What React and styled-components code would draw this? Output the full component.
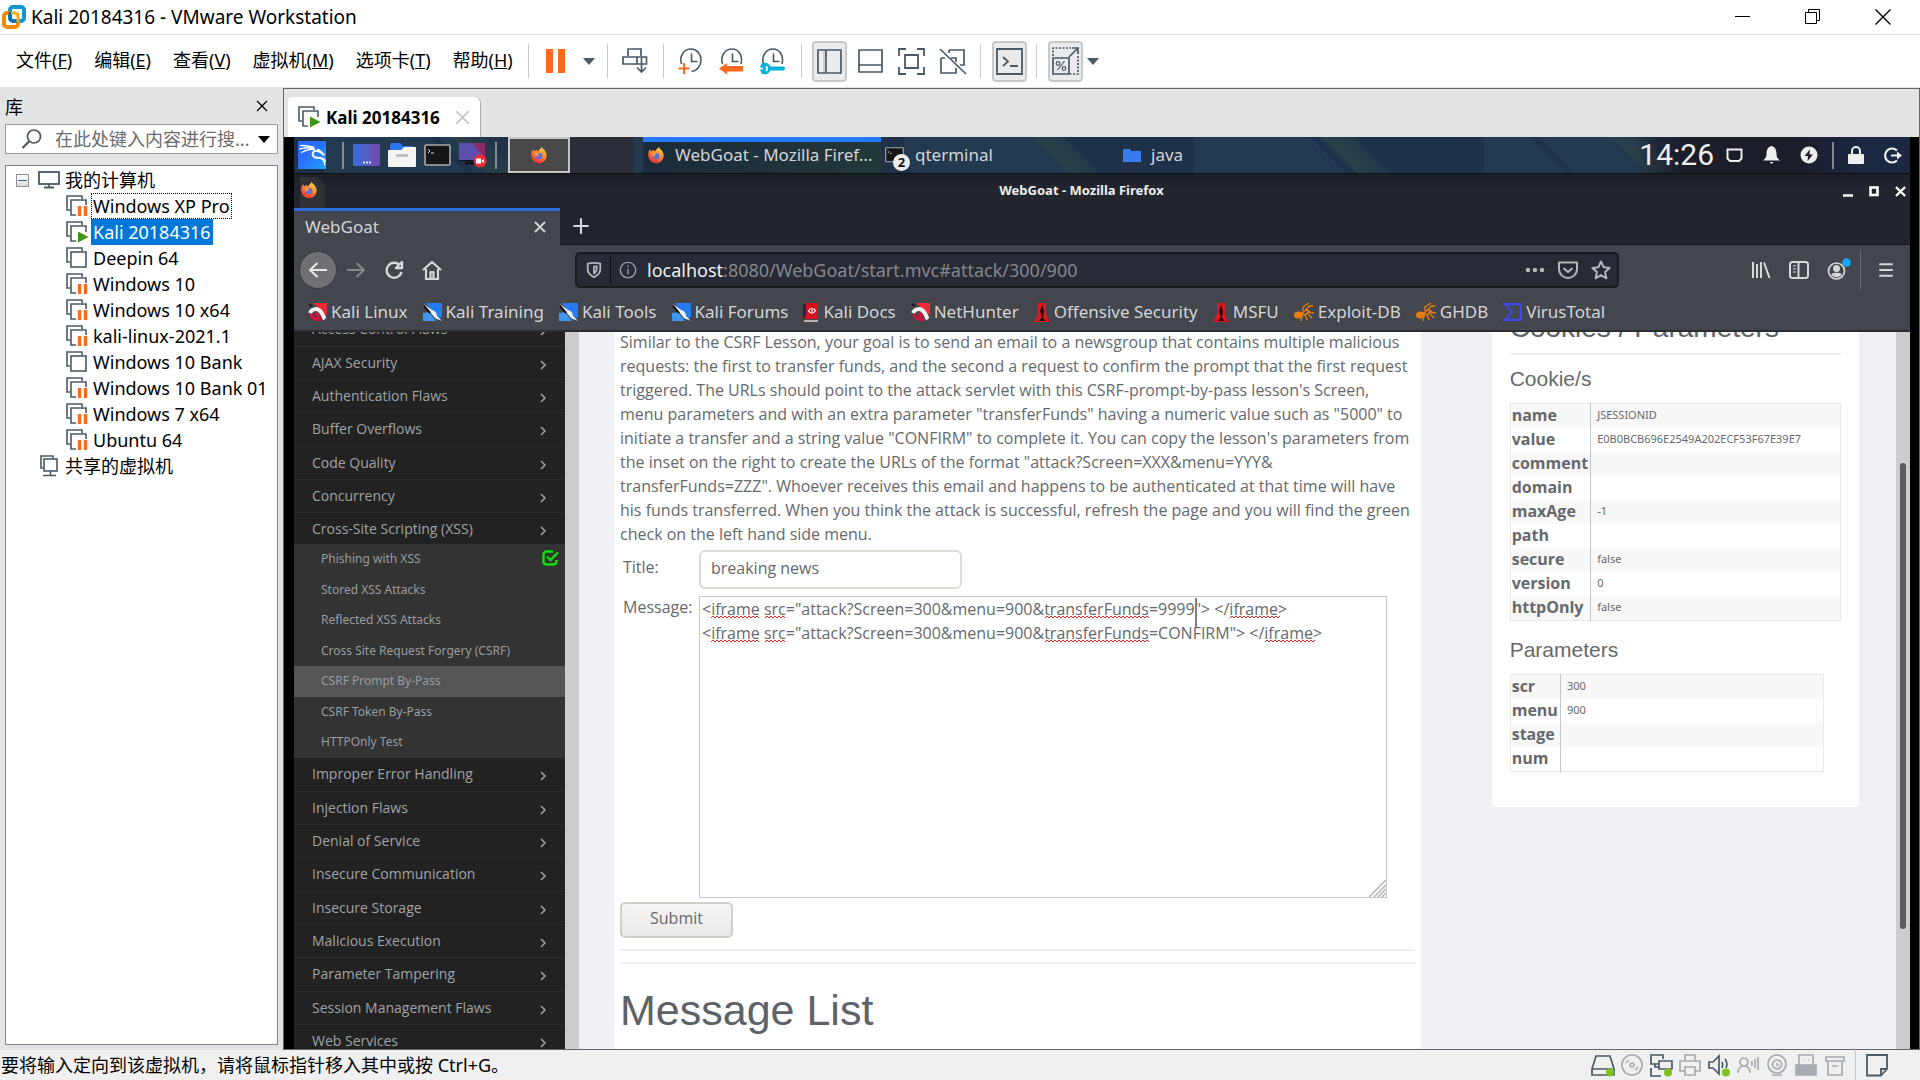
import { useState } from 'react';
import styled, { createGlobalStyle, css } from 'styled-components';
import { SiKalilinux } from 'react-icons/si';

const uiFont = "'Noto Sans', 'Noto Sans CJK SC', sans-serif";
const pageFont = "'Open Sans', 'Noto Sans', sans-serif";
const headingFont = "'Liberation Sans', Arial, sans-serif";

const GlobalStyles = createGlobalStyle`
  *, *::before, *::after {
    box-sizing: border-box;
  }
  body {
    margin: 0;
    overflow: hidden;
    font-family: ${uiFont};
    font-size: 17px;
    color: #000;
  }
  button, input, textarea {
    font: inherit;
    color: inherit;
    margin: 0;
  }
  svg {
    display: block;
    flex: none;
  }
`;

const Window = styled.div`
  display: grid;
  grid-template-rows: 34px 54px minmax(0, 1fr) 30px;
  height: 100vh;
  background: #fff;
`;

const PlainButton = styled.button`
  display: flex;
  align-items: center;
  justify-content: center;
  flex: none;
  padding: 0;
  border: 0;
  background: none;
  white-space: nowrap;
`;

/* ---------- VMware title bar, menu and tool bar ---------- */

const TitleBar = styled.header`
  display: flex;
  align-items: center;
  padding: 0 2px;
`;

const WindowTitle = styled.h1`
  flex: 1;
  margin: 0 0 0 5px;
  font-size: 19px;
  font-weight: normal;
  line-height: 24px;
`;

const WindowControl = styled(PlainButton)`
  width: 70px;
  height: 34px;
`;

const MenuBar = styled.nav`
  display: flex;
  align-items: center;
  padding-left: 16px;
  border-top: 1px solid #dfe0e1;
  border-bottom: 1px solid #e3e4e6;
`;

const Menus = styled.div`
  display: flex;
  gap: 22px;
  margin-right: 15px;
`;

const MenuButton = styled(PlainButton)`
  padding-bottom: 3px;
  font-size: 18px;
  line-height: 26px;
`;

const Separator = styled.span`
  flex: none;
  width: 1px;
  height: 34px;
  margin: ${({ $margin = '0 7px' }) => $margin};
  background: #c8c9ca;
`;

const ToolButton = styled(PlainButton)`
  width: ${({ $width = 41 }) => $width}px;
  height: 42px;
`;

const ToggleButton = styled(PlainButton)`
  width: 35px;
  height: 41px;
  border: 2px solid #c9c9c9;
  border-radius: 4px;
  background: #e9ebec;
`;

/* ---------- Library ---------- */

const Workspace = styled.div`
  display: grid;
  grid-template-columns: 283px minmax(0, 1fr);
  min-height: 0;
`;

const Library = styled.aside`
  display: flex;
  flex-direction: column;
  padding: 0 5px 5px;
  background: #e3e4e6;
`;

const LibraryHeader = styled.div`
  display: flex;
  align-items: center;
  justify-content: space-between;
  height: 36px;
  padding: 0 10px 0 0;
`;

const LibraryTitle = styled.h2`
  margin: 0;
  font-size: 18px;
  font-weight: normal;
`;

const SearchBox = styled.div`
  display: flex;
  align-items: center;
  height: 30px;
  margin-bottom: 11px;
  padding: 0 7px 0 15px;
  border: 1px solid #98999a;
  background: #fff;
`;

const SearchInput = styled.input`
  flex: 1;
  min-width: 0;
  padding: 0 0 0 12px;
  border: 0;
  outline: 0;
  background: none;
  font-size: 18px;
  &::placeholder {
    color: #6b6b6b;
  }
`;

const Tree = styled.ul`
  flex: 1;
  margin: 0;
  padding: 1px 0 0;
  border: 1px solid #7f838a;
  background: #fff;
  list-style: none;
`;

const TreeRow = styled.li`
  display: flex;
  align-items: center;
  height: 26px;
  padding-left: ${({ $depth }) => ($depth ? 59 : 10)}px;
  font-size: 18px;
`;

const TreeLabel = styled.span`
  margin-left: 2px;
  padding: 0 1px;
  border: 1px dotted transparent;
  line-height: 24px;
  white-space: nowrap;
  ${({ $focused }) => $focused && css`
    border-color: #000;
  `}
  ${({ $selected }) => $selected && css`
    background: #0078d7;
    border-color: #0078d7;
    color: #fff;
  `}
`;

const TreeIcon = styled.span`
  display: flex;
  justify-content: center;
  width: 24px;
  margin-left: ${({ $indent = 0 }) => $indent}px;
`;

const Expander = styled(PlainButton)`
  width: 13px;
  height: 13px;
  margin-right: 8px;
  border: 1px solid #919191;
  background: linear-gradient(#fff, #dcdcdc);
`;

/* ---------- Guest display ---------- */

const Display = styled.section`
  display: flex;
  flex-direction: column;
  min-height: 0;
  border: 1px solid #636568;
  background: #e3e4e6;
`;

const VmTabs = styled.div`
  display: flex;
  align-items: flex-end;
  height: 48px;
  padding-left: 4px;
`;

const VmTab = styled.div`
  display: flex;
  align-items: center;
  height: 40px;
  padding: 0 10px 0 9px;
  border: 1px solid #a9abad;
  border-width: 0 1px 0 0;
  border-radius: 4px 6px 0 0;
  background: #fff;
  font-weight: bold;
`;

const VmTabName = styled.span`
  margin: 0 15px 0 5px;
  font-size: 17px;
`;

const Guest = styled.div`
  flex: 1;
  display: flex;
  flex-direction: column;
  min-height: 0;
  padding: 0 9px 0 10px;
  background: #000;
  color: #d3d5d8;
`;

const KaliPanel = styled.div`
  display: flex;
  align-items: center;
  height: 37px;
  padding-right: 8px;
  border-bottom: 1px solid #0d0f13;
  background:
    linear-gradient(90deg, transparent 83%, #1b1d29 86%, #1b1d29 93%, #1c2742 97%),
    linear-gradient(45deg, transparent 44%, #1f2f4e 44%, #20324a 47%, transparent 47%) 500px 0 / 220px 100%,
    linear-gradient(45deg, #223950 50%, #2a4146 50%, #22384c 60%, #1f3049 60%) 30px 0 / 290px 100%,
    #21344c;
`;

const PanelDivider = styled.span`
  width: 2px;
  height: 27px;
  margin: ${({ $margin }) => $margin};
  background: #85898f;
`;

const DragonTile = styled.span`
  display: flex;
  align-items: center;
  justify-content: center;
  width: 28px;
  height: 28px;
  margin-left: 4px;
  background: linear-gradient(135deg, #2a6cff 40%, #22a4ff);
  color: #f3f8ff;
`;

const Launchers = styled.div`
  display: flex;
  align-items: center;
  gap: 8px;
`;

const Pager = styled.div`
  display: grid;
  grid-template-columns: 62px 64px;
  height: 36px;
  margin-right: 9px;
  background: #2b2d38;
`;

const ActiveDesk = styled(PlainButton)`
  border: 2px solid #c5c6c5;
  background: #484848;
`;

const Task = styled(PlainButton)`
  justify-content: flex-start;
  width: 238px;
  height: 36px;
  gap: ${({ $gap = 10 }) => $gap}px;
  padding: 0 4px 5px;
  border-top: 5px solid transparent;
  line-height: 24px;
  ${({ $active }) => $active && css`
    border-color: #2777ff;
    background: linear-gradient(90deg, #1b2b3b, #22383a);
  `}
`;

const TerminalIcon = styled.span`
  position: relative;
  display: block;
  padding-right: 7px;
`;

const CountBadge = styled.span`
  position: absolute;
  left: 8px;
  top: 7px;
  width: 17px;
  height: 17px;
  border-radius: 50%;
  background: #eee;
  color: #111;
  font-size: 13px;
  font-weight: bold;
  line-height: 17px;
  text-align: center;
`;

const Tray = styled.div`
  display: flex;
  align-items: center;
  gap: 20px;
  margin-left: auto;
`;

const Clock = styled.time`
  margin-right: -8px;
  color: #eee;
  font-family: Roboto, sans-serif;
  font-size: 30px;
  line-height: 36px;
`;

const FirefoxTitle = styled.div`
  display: flex;
  align-items: flex-end;
  height: 34px;
  padding: 0 4px 0 6px;
  background: linear-gradient(#1b1e24, #22252d 40%);
`;

const DocBadge = styled.span`
  width: 25px;
  height: 31px;
  padding-top: 4px;
  background: #2f3137;
  clip-path: polygon(0 0, 70% 0, 100% 25%, 100% 100%, 0 100%);
`;

const FirefoxTitleText = styled.span`
  flex: 1;
  align-self: flex-start;
  padding-right: 5px;
  color: #eee;
  font-size: 13px;
  font-weight: bold;
  line-height: 32px;
  text-align: center;
`;

const FrameControls = styled.div`
  display: flex;
  align-self: center;
  gap: 16px;
`;

const TabStrip = styled.div`
  display: flex;
  height: 37px;
  border-bottom: 1px solid #17191e;
  background: #22252d;
`;

const BrowserTab = styled.div`
  display: flex;
  align-items: center;
  justify-content: space-between;
  width: 266px;
  height: 37px;
  padding: 0 14px 2px 11px;
  border-top: 3px solid #2c6be0;
  background: #43464c;
  line-height: 24px;
`;

const NewTab = styled(PlainButton)`
  width: 41px;
`;

const NavBar = styled.div`
  display: flex;
  align-items: center;
  height: 50px;
  padding: 0 15px 0 5px;
  background: #43464c;
`;

const BackButton = styled(PlainButton)`
  width: 38px;
  height: 38px;
  border: 1px solid #36383d;
  border-radius: 50%;
  background: #6f7073;
`;

const NavButton = styled(PlainButton)`
  width: 38px;
`;

const UrlBar = styled.div`
  display: flex;
  align-items: center;
  flex: 1;
  height: 36px;
  margin: 0 132px 0 124px;
  padding: 0 6px 0 8px;
  border: 2px solid #191b20;
  border-radius: 5px;
  background: #282a35;
`;

const UrlDivider = styled.span`
  width: 1px;
  height: 28px;
  margin: 0 8px 0 7px;
  background: #0c0d10;
`;

const Url = styled.span`
  flex: 1;
  margin-left: 10px;
  color: #85878e;
  font-size: 18px;
  line-height: 24px;
  b {
    color: #f0f1f3;
    font-weight: normal;
  }
`;

const UrlActions = styled.div`
  display: flex;
  gap: 13px;
`;

const BrowserTools = styled.div`
  display: flex;
  align-items: center;
  gap: 18px;
`;

const ToolsDivider = styled.span`
  width: 1px;
  height: 40px;
  margin: 0 -2px 0 -10px;
  background: #64676c;
`;

const Bookmarks = styled.div`
  display: flex;
  gap: 15px;
  height: 37px;
  padding: 0 0 1px 14px;
  border-bottom: 2px solid #2c2d31;
  background: #43464c;
`;

const Bookmark = styled.a`
  display: flex;
  align-items: center;
  gap: 4px;
  color: #d3d5d8;
  line-height: 24px;
  text-decoration: none;
  white-space: nowrap;
`;

/* ---------- WebGoat page ---------- */

const Page = styled.main`
  flex: 1;
  display: flex;
  min-height: 0;
  overflow: hidden;
  background: #f0f1f7;
  color: #65696d;
  font-family: ${pageFont};
  font-size: 16px;
`;

const SideMenu = styled.nav`
  flex: none;
  width: 271px;
  overflow: hidden;
  background: #222;
`;

const CategoryRow = styled.li`
  height: 33px;
  border-bottom: 1px solid #2e2e2e;
  &:nth-child(3n + 1) {
    height: 34px;
  }
`;

/* the list above the open category is scrolled partly out of view */
const SideList = styled.ul`
  margin: 0;
  padding: 0;
  list-style: none;
  ${({ $scrolled }) => $scrolled && css`
    margin-top: -19px;
    ${CategoryRow}:last-child {
      height: 31px;
      border-bottom: 0;
    }
  `}
`;

const CategoryLink = styled.a`
  display: flex;
  align-items: center;
  justify-content: space-between;
  height: 31px;
  padding: 0 18px;
  color: #a0a3a6;
  font-size: 14px;
  text-decoration: none;
  svg {
    margin-top: 5px;
  }
`;

const LessonList = styled.ul`
  margin: 0;
  padding: 0;
  background: #333;
  list-style: none;
`;

const LessonRow = styled.li`
  height: 30px;
  background: ${({ $current }) => ($current ? '#555' : 'transparent')};
  &:nth-child(odd) {
    height: 31px;
  }
`;

const LessonLink = styled.a`
  display: flex;
  align-items: center;
  justify-content: space-between;
  height: 28px;
  padding: 0 6px 0 27px;
  color: #999c9f;
  font-family: ${uiFont};
  font-size: 12px;
  text-decoration: none;
`;

const ScrollTrack = styled.div`
  flex: none;
  width: 14px;
  padding: ${({ $offset = 0 }) => $offset}px 4px 0;
  background: #cdcdcd;
`;

const ScrollThumb = styled.div`
  height: 466px;
  border-radius: 4px;
  background: #585e5e;
`;

const Columns = styled.div`
  flex: 1;
  display: grid;
  grid-template-columns: 806fr 367fr;
  column-gap: 71px;
  align-items: start;
  padding: 0 37px 0 35px;
`;

const Lesson = styled.article`
  min-height: 100%;
  padding: 0 6px;
  background: #fff;
`;

const Instructions = styled.p`
  margin: -2px 0 0;
  line-height: 24px;
  white-space: pre-line;
`;

const LessonForm = styled.form`
  padding-top: 4px;
`;

const Field = styled.div`
  display: flex;
  align-items: flex-start;
  padding-left: 3px;
  margin-bottom: ${({ $gap }) => $gap}px;
`;

const FieldLabel = styled.label`
  width: 76px;
  line-height: ${({ $height }) => $height}px;
`;

const TitleInput = styled.input`
  width: 263px;
  height: 39px;
  padding: 0 10px 3px;
  border: 2px solid #dedbd7;
  border-radius: 6px;
  background: #fff;
  outline: 0;
`;

const Editor = styled.div`
  position: relative;
  width: 688px;
  height: 302px;
`;

const MessageInput = styled.textarea`
  display: block;
  width: 100%;
  height: 100%;
  padding: 0 2px;
  overflow: hidden;
  border: 1px solid #c9c4c0;
  background: #fff;
  outline: 0;
  resize: none;
  line-height: 24px;
`;

const SpellMark = styled.svg`
  position: absolute;
  left: ${({ $left }) => $left}px;
  top: ${({ $line }) => 19 + $line * 24}px;
`;

const PointerBar = styled.span`
  position: absolute;
  left: 496px;
  top: 2px;
  width: 2px;
  height: 29px;
  background: #7b7e82;
`;

const Grip = styled.svg`
  position: absolute;
  right: 1px;
  bottom: 1px;
`;

const SubmitButton = styled(PlainButton)`
  width: 113px;
  height: 36px;
  padding-bottom: 4px;
  border: 2px solid #d2cec9;
  border-radius: 5px;
  background: linear-gradient(#f6f5f4, #eae9e8);
`;

const Rule = styled.hr`
  height: 2px;
  margin: ${({ $top }) => $top}px 0 0;
  border: 0;
  background: #efeff0;
`;

const MessageHeading = styled.h2`
  margin: 22px 0 0;
  color: #5d6267;
  font-family: ${headingFont};
  font-size: 43px;
  font-weight: normal;
  line-height: 48px;
`;

const ParamsCard = styled.aside`
  height: 475px;
  padding: 0 18px;
  overflow: hidden;
  border-radius: 0 0 4px 4px;
  background: #fff;
`;

const CardTitle = styled.h3`
  margin: -20px 0 0;
  color: #5d6267;
  font-family: ${headingFont};
  font-size: 28px;
  font-weight: normal;
  line-height: 32px;
`;

const CardHeading = styled.h4`
  margin: ${({ $top }) => $top}px 0 10px;
  color: #65696d;
  font-family: ${headingFont};
  font-size: 21px;
  font-weight: normal;
  line-height: 28px;
`;

const ParamTable = styled.table`
  width: ${({ $width }) => $width};
  border-collapse: collapse;
  border: 1px solid #e9e9e9;
  tr:nth-child(odd) {
    background: #f8f8f8;
  }
  th {
    width: 1px;
    padding: 0 2px 2px 1px;
    border-right: 1px solid #c5c5c5;
    font-size: 16px;
    line-height: 22px;
    text-align: left;
  }
  td {
    padding: 0 6px 2px;
    font-family: ${uiFont};
    font-size: 11px;
    line-height: 22px;
  }
`;

/* ---------- Status bar ---------- */

const StatusBar = styled.footer`
  display: flex;
  align-items: center;
  justify-content: space-between;
  padding: 0 32px 0 1px;
  background: #f0f0f0;
  font-size: 18px;
  line-height: 28px;
`;

const Devices = styled.div`
  display: flex;
  align-items: center;
  gap: 5px;
`;

/* ---------- Icons ---------- */

const slate = '#4a5a67';
const orange = '#ff6a1f';

const VmwareLogo = () => (
  <svg width="24" height="24" viewBox="0 0 24 24" fill="none" strokeWidth="4">
    <rect x="8" y="2" width="14" height="14" rx="3" stroke="#0f95d4" />
    <path d="M8 8H5a3 3 0 0 0-3 3v8a3 3 0 0 0 3 3h8a3 3 0 0 0 3-3v-3" stroke="#f38b00" />
    <path d="M8 7v6a3 3 0 0 0 3 3h5" stroke="#0a6fae" strokeWidth="3" />
    <path d="M9 8h4a3 3 0 0 1 3 3v6" stroke="#f7a71c" strokeWidth="3" />
  </svg>
);

const Triangle = ({ color = slate }) => (
  <svg width="12" height="7" viewBox="0 0 12 7">
    <path d="M0 0h12L6 7z" fill={color} />
  </svg>
);

const VmIcon = ({ state }) => (
  <svg width="24" height="24" viewBox="0 0 24 24" fill="none" stroke={slate} strokeWidth="1.6">
    <path d="M5 16H2V2h15v3" />
    {state === 'off' && <rect x="6" y="6" width="15" height="15" />}
    {state === 'paused' && (
      <>
        <path d="M11 21H6V6h15v5" />
        <path d="M14.5 12v10M20.5 12v10" stroke={orange} strokeWidth="3.4" />
      </>
    )}
    {state === 'running' && (
      <>
        <path d="M11 21H6V6h15v6" />
        <path d="M13 11.5l10.500 5.500L13 22.500z" fill="#3f960f" stroke="none" />
      </>
    )}
  </svg>
);

const MonitorIcon = () => (
  <svg width="22" height="18" viewBox="0 0 22 18" fill="none" stroke={slate} strokeWidth="1.8">
    <rect x="1" y="1" width="20" height="12" />
    <path d="M11 13v3M6 16.500h10" />
  </svg>
);

const SharedIcon = () => (
  <svg width="18" height="22" viewBox="0 0 18 22" fill="none" stroke={slate} strokeWidth="1.6">
    <path d="M4 13H1V1h12v2" />
    <rect x="4" y="4" width="13" height="12" />
    <path d="M10.500 16v4M3 20.500h13" />
  </svg>
);

const SearchIcon = () => (
  <svg width="22" height="22" viewBox="0 0 22 22" fill="none" stroke="#4d565e" strokeWidth="1.7">
    <circle cx="13" cy="8.5" r="6.5" />
    <path d="M8.500 13L1.500 20" strokeWidth="2.2" />
  </svg>
);

const Cross = ({ size = 12, color = '#000', width = 1.3 }) => (
  <svg width={size} height={size} viewBox="0 0 12 12" stroke={color} strokeWidth={width}>
    <path d="M1 1l10 10M11 1L1 11" />
  </svg>
);

const SendKeysIcon = () => (
  <svg width="26" height="26" viewBox="0 0 26 26" fill="none" stroke={slate} strokeWidth="1.7">
    <path d="M6 8V1h13v7M1 9h23.500v7H1zM15 9v7M19.500 9v15M15 19.500l4.500 4.500 4.500-4.500" />
  </svg>
);

const SnapshotIcon = ({ kind }) => (
  <svg width="26" height="28" viewBox="0 0 26 28" fill="none" stroke={slate} strokeWidth="1.6">
    {kind === 'take' ? (
      <path d="M3.500 17C1 9 6 2 13 2c6 0 10 5 10 11s-4 11-9.500 11.500" />
    ) : (
      <path d="M3.500 17C1 9 6 2 13 2s11 7 9 15" />
    )}
    <path d="M13.500 6.500v8h6" />
    {kind === 'take' && <path d="M6 16v11M.5 21.500h11" stroke={orange} strokeWidth="2" />}
    {kind === 'revert' && <path d="M0 21.500l8-5.500v3h16v5.500H8v3z" fill={orange} stroke="none" />}
    {kind === 'manage' && (
      <g stroke="#05b3d8" strokeLinecap="round">
        <path d="M10 21.500h13" strokeWidth="4" />
        <path d="M2.500 17.500c4-1.500 7 1 7 4s-3 5.500-7 4M1.500 19.500h3v4h-3" strokeWidth="2.6" />
      </g>
    )}
  </svg>
);

const LibraryViewIcon = () => (
  <svg width="25" height="25" viewBox="0 0 25 25" fill="none" stroke={slate} strokeWidth="1.7">
    <path d="M1 1h23v23H1zM9 1v23" />
    <path d="M7 2v21" stroke="#c5cbd0" />
  </svg>
);

const ThumbnailIcon = () => (
  <svg width="25" height="24" viewBox="0 0 25 24" fill="none" stroke={slate} strokeWidth="1.7">
    <path d="M1 1h23v22H1zM1 16h23" />
  </svg>
);

const FullscreenIcon = () => (
  <svg width="27" height="27" viewBox="0 0 27 27" fill="none" stroke={slate} strokeWidth="1.8">
    <path d="M1 8V1h7M19 1h7v7M26 19v7h-7M8 26H1v-7M7 7h13v13H7z" />
  </svg>
);

const UnityIcon = () => (
  <svg width="28" height="27" viewBox="0 0 28 27" fill="none" stroke={slate} strokeWidth="1.7">
    <path d="M10 2h15v15h-4M10 2v3M2 10v15h15v-5M2 10h4M12 10h5v4M1 1l26 25" />
  </svg>
);

const ConsoleIcon = () => (
  <svg width="27" height="27" viewBox="0 0 27 27" fill="none" stroke={slate} strokeWidth="1.8">
    <path d="M1 1h25v25H1zM7 9l5 4.500L7 18M14 18h8" />
  </svg>
);

const StretchIcon = () => (
  <svg width="27" height="28" viewBox="0 0 27 28" fill="none" stroke={slate} strokeWidth="1.7">
    <path d="M1 9V1h18M26 9v18h-8" strokeDasharray="2 1.5" />
    <path d="M1 11h16v16H1zM17 10L25 2M20 1h6v6" />
    <path d="M5.500 23l7-9" strokeWidth="1.2" />
    <circle cx="6" cy="16.5" r="1.8" strokeWidth="1.2" />
    <circle cx="12" cy="21.5" r="1.8" strokeWidth="1.2" />
  </svg>
);

const FirefoxIcon = ({ size = 18 }) => (
  <svg width={size} height={size} viewBox="0 0 20 20">
    <defs>
      <linearGradient id="fox" x1="0.8" y1="0" x2="0.3" y2="1">
        <stop offset="0" stopColor="#ffe14d" />
        <stop offset="0.45" stopColor="#ff8a2b" />
        <stop offset="1" stopColor="#f0283f" />
      </linearGradient>
    </defs>
    <path
      d="M13 1c1 2 5 4 5.500 9a8.500 8.500 0 0 1-17 1.500C1 8 2 5 3.500 3.500L4.500 6 7 4.500 9 6c1-2.500 3-3 4-5z"
      fill="url(#fox)"
    />
    <circle cx="10" cy="11" r="3.6" fill="#5a6fe0" />
    <path d="M5 8c3-1 5 0 6 1-2 0-3 1-2 2.500-2 .5-4-1-4-3.500z" fill="#ff9a3a" />
  </svg>
);

const DesktopTile = () => (
  <svg width="27" height="22" viewBox="0 0 27 22">
    <defs>
      <linearGradient id="desk">
        <stop offset="0" stopColor="#376fe0" />
        <stop offset="1" stopColor="#7249a8" />
      </linearGradient>
    </defs>
    <rect width="27" height="22" rx="1" fill="url(#desk)" />
    <path d="M10 18.500h8" stroke="#dfe6ff" strokeWidth="2" strokeDasharray="2 1" />
  </svg>
);

const FilesTile = () => (
  <svg width="28" height="26" viewBox="0 0 28 26">
    <path d="M2 3a2 2 0 0 1 2-2h8l3 3h9a2 2 0 0 1 2 2v6H2z" fill="#2f73ee" />
    <path d="M0 8h13l3-3h12v19a1 1 0 0 1-1 1H1a1 1 0 0 1-1-1z" fill="#f4f4f4" />
    <path d="M8 13.500h12" stroke="#b9b9b9" strokeWidth="2.5" />
  </svg>
);

const TerminalTile = ({ width = 27 }) => (
  <svg width={width} height={(width * 22) / 27} viewBox="0 0 27 22" fill="none">
    <rect x="1" y="1" width="25" height="20" rx="1" fill="#161616" stroke="#a9a9a9" strokeWidth="1.6" />
    <path d="M4 5l2 2-2 2M7 9h3" stroke="#ddd" />
  </svg>
);

const RecordTile = () => (
  <svg width="28" height="26" viewBox="0 0 28 26">
    <rect y="1" width="26" height="17" fill="#5b4fae" />
    <path d="M14 1h12v17z" fill="#8a2d66" />
    <path d="M0 18.500h26" stroke="#0e1018" />
    <path d="M6 21h9" stroke="#0e1018" strokeWidth="3" />
    <circle cx="21" cy="19" r="6.5" fill="#ee2a35" />
    <path d="M17 16.500h5v5h-5zM22 19l3-2v4z" fill="#fff" />
  </svg>
);

const FolderIcon = () => (
  <svg width="18" height="14" viewBox="0 0 18 14">
    <path d="M0 1h7l1 2h10v11H0z" fill="#367bf0" />
  </svg>
);

const trayIcons = {
  display: (
    <svg width="17" height="15" viewBox="0 0 17 15" fill="none" stroke="#eee" strokeWidth="2">
      <path d="M1.500 1.500h14v9L13 13H4l-2.500-2.500z" />
    </svg>
  ),
  bell: (
    <svg width="17" height="18" viewBox="0 0 17 18" fill="#eee">
      <path d="M8.500 0C5 1 3.500 3.500 3.500 8c0 3-1 4.500-3.500 6.500h17C14.500 12.500 13.500 11 13.500 8 13.500 3.500 12 1 8.500 0zM6.500 16h4l-2 2z" />
    </svg>
  ),
  power: (
    <svg width="18" height="18" viewBox="0 0 18 18">
      <circle cx="9" cy="9" r="8.5" fill="#eee" />
      <path d="M10 3.500L4.500 10H8l-.5 5L13 8.500H9.500z" fill="#1b1d29" />
    </svg>
  ),
  lock: (
    <svg width="16" height="18" viewBox="0 0 16 18">
      <path d="M4 9V5a4 4 0 0 1 8 0v4" fill="none" stroke="#eee" strokeWidth="2" />
      <rect y="8" width="16" height="10" rx="1" fill="#eee" />
    </svg>
  ),
  logout: (
    <svg width="18" height="17" viewBox="0 0 18 17" fill="none" stroke="#eee" strokeWidth="2.2">
      <path d="M13 3.500a7 7 0 1 0 0 10M7 8.500h8" />
      <path d="M13 4.500l5 4-5 4z" fill="#eee" stroke="none" />
    </svg>
  ),
};

const Glyph = ({ d, size = 20, color = '#d6d7d9', width = 2, fill = 'none' }) => (
  <svg
    width={size}
    height={size}
    viewBox="0 0 20 20"
    fill={fill}
    stroke={color}
    strokeWidth={width}
    strokeLinejoin="round"
  >
    <path d={d} />
  </svg>
);

const paths = {
  back: 'M19 10H2M9.500 3L2 10l7.500 7',
  forward: 'M1 10h17M10.500 3l7.500 7-7.500 7',
  reload: 'M16 5.500A7.500 7.500 0 1 0 17.500 12M18 2v6h-6z',
  home: 'M1 10l9-8 9 8M4 9v10h12V9M8.500 18v-6h3v6',
  shield: 'M10 2c3 0 5 .5 7 1v6c0 4-2.500 7-7 9-4.500-2-7-5-7-9V3c2-.5 4-1 7-1zM10 6v8c2-1.500 3-3 3-5V6z',
  info: 'M10 1.500a8.500 8.500 0 1 0 .01 0zM10 9v6M10 5v2',
  pocket: 'M1 2.500h18V9c0 5-4 9-9 9s-9-4-9-9zM5.500 8l4.500 4 4.500-4',
  star: 'M10 1.500l2.600 5.700 6 .7-4.500 4.200 1.300 6.200L10 15l-5.400 3.300 1.300-6.200L1.400 7.900l6-.7z',
  library: 'M2 2v16M6 4v14M10 2v16M13 2.500l5.500 15.500',
  menu: 'M2.500 3.500h15M2.500 10h15M2.500 16.500h15',
};

const SidebarIcon = () => (
  <svg width="20" height="18" viewBox="0 0 20 18" fill="none" stroke="#d6d7d9" strokeWidth="2">
    <rect x="1" y="1" width="18" height="16" rx="2.5" />
    <path d="M9.500 1v16" />
    <path d="M4 5h3M4 8h3M4 11h3" strokeWidth="1.2" />
  </svg>
);

const AccountIcon = () => (
  <svg width="25" height="24" viewBox="0 0 25 24">
    <circle cx="9.5" cy="13" r="8" fill="none" stroke="#d6d7d9" strokeWidth="1.7" />
    <circle cx="9.5" cy="10.5" r="3.5" fill="#d6d7d9" />
    <path d="M4 16.500c1.500-2.500 9.500-2.500 11 0-3 3.500-8 3.500-11 0z" fill="#d6d7d9" />
    <circle cx="19.5" cy="4.500" r="4.2" fill="#12a9f5" />
  </svg>
);

const BookmarkIcon = ({ kind }) => {
  switch (kind) {
    case 'kali-red':
      return (
        <svg width="19" height="18" viewBox="0 0 19 18" fill="none">
          <path d="M5 0h14v13z" fill="#ee2b33" />
          <path d="M1 1l3 2" stroke="#15161a" strokeWidth="2" />
          <path d="M2 10c2-5 8-5 11-1 2 2 2 5 4 7" stroke="#f1f1f1" strokeWidth="4" />
          <path d="M3 11c1 5 6 6 10 5" stroke="#d3143f" strokeWidth="3.4" />
          <path d="M7 10l5 4" stroke="#d3143f" strokeWidth="3" />
        </svg>
      );
    case 'kali-blue':
      return (
        <svg width="19" height="18" viewBox="0 0 19 18" fill="none">
          <path d="M3 0h16v14l-5 3z" fill="#247bf2" />
          <path d="M0 10l6-1 7 9H0z" fill="#3f97ef" />
          <path d="M1 1l8 6c4 1 5 4 5 6l5 5-7-3-4-5z" fill="#f2f5f8" />
          <path d="M1 3l6 7" stroke="#14161b" strokeWidth="2" />
        </svg>
      );
    case 'docs':
      return (
        <svg width="16" height="19" viewBox="0 0 16 19" fill="none">
          <path d="M0 1h3v15H0z" fill="#2a1e4b" />
          <path d="M3 0h12v16H1v-2l2-1z" fill="#d5121b" />
          <path d="M1 18h14" stroke="#e8d5d5" strokeWidth="1.5" />
          <path d="M7.500 5.500L5.500 8l2 2M10.500 5.500l2 2-2 2.500M9 5v6" stroke="#fff" strokeWidth="1.2" />
        </svg>
      );
    case 'offsec':
      return (
        <svg width="16" height="19" viewBox="0 0 16 19">
          <path d="M4 0h8v11l4 8H0l4-8z" fill="#d91920" />
          <path d="M8 2l2 6-1 7 3 3H5l3-4-2-6z" fill="#24090b" />
        </svg>
      );
    case 'bug':
      return (
        <svg width="20" height="18" viewBox="0 0 20 18" fill="none" stroke="#e67c12" strokeWidth="1.4">
          <ellipse cx="4.5" cy="12" rx="4.500" ry="3.500" fill="#e67c12" stroke="none" />
          <path d="M8 10l4-3 3 1-4 4zM9 8L9 4l6-4M12 7l3-4h4M14 9l6 1M11 11l2 6M8 13l-1 5M13 10l5 5" />
        </svg>
      );
    default:
      return (
        <svg width="19" height="18" viewBox="0 0 19 18" fill="none" stroke="#3d4bea" strokeWidth="2.2">
          <path d="M2 1.200h15.800v15.600H2L9 9z" />
        </svg>
      );
  }
};

const Chevron = () => (
  <svg width="7" height="10" viewBox="0 0 7 10" fill="none" stroke="#a0a3a6" strokeWidth="1.5">
    <path d="M1 1l4 4-4 4" />
  </svg>
);

const SolvedIcon = () => (
  <svg width="17" height="16" viewBox="0 0 17 16" fill="none" stroke="#0be30b" strokeWidth="2.4">
    <path d="M11 1.500H4.500a3 3 0 0 0-3 3v7a3 3 0 0 0 3 3h7a3 3 0 0 0 3-3V10" />
    <path d="M5 6.500l3.500 3.500L16 2.500" />
  </svg>
);

const faded = '#a6acb2';
const deviceIcons = [
  ['硬盘', slate, <path key="a" d="M5 3h14l4 13v6H1v-6zM1 16h20" />, true],
  ['CD/DVD', faded, <path key="a" d="M12 2a10 10 0 1 0 .01 0zM12 10a2 2 0 1 0 .01 0zM6 10l3-3M15 17l3-3" />],
  ['网络适配器', slate, <path key="a" d="M14 6V2H2v9h7M10 8h13v8H10zM6 11v3h4M2 15v8h10" />, true],
  ['打印机', faded, <path key="a" d="M7 8V2h10v6M7 18H2V8h20v10h-5M7 14h10v8H7z" />],
  ['声卡', slate, <path key="a" d="M2 9h4l6-6v18l-6-6H2zM15 9c1 2 1 4 0 6M18 6c2 3 2 7 1 9" />, true],
  ['麦克风', faded, <path key="a" d="M8 5a4 4 0 1 0 .01 0zM2 20c0-5 3-7 6-7s6 2 6 7M16 8v5M19 6v9M22 4v13" />],
  ['摄像头', faded, <path key="a" d="M12 2a9 9 0 1 0 .01 0zM12 7a4.500 4.500 0 1 0 .01 0zM12 10v2h2M7 22h10" />],
  [
    'USB',
    faded,
    <g key="a">
      <path d="M5 12V2h14v10M10 7h1M14 7h1" />
      <path d="M2 12h20v10H2z" fill={faded} />
    </g>,
  ],
  ['存储', faded, <path key="a" d="M3 4h18v4H3zM5 8v14h14V8M9 13h6" />],
];

const NoteIcon = () => (
  <svg width="22" height="23" viewBox="0 0 22 23" fill="none" stroke={slate} strokeWidth="1.8">
    <path d="M1 1h20v14l-6 6.500H1zM21 15h-6v6" />
  </svg>
);

/* ---------- Data ---------- */

const menus = [
  ['文件', 'F'],
  ['编辑', 'E'],
  ['查看', 'V'],
  ['虚拟机', 'M'],
  ['选项卡', 'T'],
  ['帮助', 'H'],
];

const machines = [
  { name: 'Windows XP Pro', state: 'paused', focused: true },
  { name: 'Kali 20184316', state: 'running', selected: true },
  { name: 'Deepin 64', state: 'off' },
  { name: 'Windows 10', state: 'paused' },
  { name: 'Windows 10 x64', state: 'paused' },
  { name: 'kali-linux-2021.1', state: 'paused' },
  { name: 'Windows 10 Bank', state: 'off' },
  { name: 'Windows 10 Bank 01', state: 'paused' },
  { name: 'Windows 7 x64', state: 'paused' },
  { name: 'Ubuntu 64', state: 'paused' },
];

const bookmarks = [
  ['Kali Linux', 'kali-red'],
  ['Kali Training', 'kali-blue'],
  ['Kali Tools', 'kali-blue'],
  ['Kali Forums', 'kali-blue'],
  ['Kali Docs', 'docs'],
  ['NetHunter', 'kali-red'],
  ['Offensive Security', 'offsec'],
  ['MSFU', 'offsec'],
  ['Exploit-DB', 'bug'],
  ['GHDB', 'bug'],
  ['VirusTotal', 'virustotal'],
];

const categoriesAbove = [
  'Access Control Flaws',
  'AJAX Security',
  'Authentication Flaws',
  'Buffer Overflows',
  'Code Quality',
  'Concurrency',
  'Cross-Site Scripting (XSS)',
];

const lessons = [
  { name: 'Phishing with XSS', solved: true },
  { name: 'Stored XSS Attacks' },
  { name: 'Reflected XSS Attacks' },
  { name: 'Cross Site Request Forgery (CSRF)' },
  { name: 'CSRF Prompt By-Pass', current: true },
  { name: 'CSRF Token By-Pass' },
  { name: 'HTTPOnly Test' },
];

const categoriesBelow = [
  'Improper Error Handling',
  'Injection Flaws',
  'Denial of Service',
  'Insecure Communication',
  'Insecure Storage',
  'Malicious Execution',
  'Parameter Tampering',
  'Session Management Flaws',
  'Web Services',
];

const instructions = `Similar to the CSRF Lesson, your goal is to send an email to a newsgroup that contains multiple malicious
requests: the first to transfer funds, and the second a request to confirm the prompt that the first request
triggered. The URLs should point to the attack servlet with this CSRF-prompt-by-pass lesson's Screen,
menu parameters and with an extra parameter "transferFunds" having a numeric value such as "5000" to
initiate a transfer and a string value "CONFIRM" to complete it. You can copy the lesson's parameters from
the inset on the right to create the URLs of the format "attack?Screen=XXX&menu=YYY&
transferFunds=ZZZ". Whoever receives this email and happens to be authenticated at that time will have
his funds transferred. When you think the attack is successful, refresh the page and you will find the green
check on the left hand side menu.`;

const defaultMessage = `<iframe src="attack?Screen=300&menu=900&transferFunds=9999"> </iframe>
<iframe src="attack?Screen=300&menu=900&transferFunds=CONFIRM"> </iframe>`;

const misspelt = [
  { line: 0, left: 12, width: 49 },
  { line: 0, left: 66, width: 21 },
  { line: 0, left: 346, width: 104 },
  { line: 0, left: 531, width: 50 },
  { line: 1, left: 12, width: 49 },
  { line: 1, left: 66, width: 21 },
  { line: 1, left: 346, width: 104 },
  { line: 1, left: 566, width: 50 },
];

const cookie = [
  ['name', 'JSESSIONID'],
  ['value', 'E0B0BCB696E2549A202ECF53F67E39E7'],
  ['comment', ''],
  ['domain', ''],
  ['maxAge', '-1'],
  ['path', ''],
  ['secure', 'false'],
  ['version', '0'],
  ['httpOnly', 'false'],
];

const parameters = [
  ['scr', '300'],
  ['menu', '900'],
  ['stage', ''],
  ['num', ''],
];

/* ---------- Components ---------- */

function Toolbar() {
  return (
    <MenuBar>
      <Menus>
        {menus.map(([label, key]) => (
          <MenuButton key={key}>
            <span>
              {label}(<u>{key}</u>)
            </span>
          </MenuButton>
        ))}
      </Menus>
      <Separator $margin="0" />
      <ToolButton $width={54} aria-label="挂起">
        <svg width="20" height="24" viewBox="0 0 20 24" fill={orange}>
          <path d="M0 0h7v24H0zM12 0h7v24h-7z" />
        </svg>
      </ToolButton>
      <ToolButton $width={12} aria-label="电源">
        <Triangle />
      </ToolButton>
      <Separator $margin="0 7px 0 12px" />
      <ToolButton aria-label="发送 Ctrl+Alt+Del">
        <SendKeysIcon />
      </ToolButton>
      <Separator />
      <ToolButton aria-label="拍摄快照">
        <SnapshotIcon kind="take" />
      </ToolButton>
      <ToolButton aria-label="恢复快照">
        <SnapshotIcon kind="revert" />
      </ToolButton>
      <ToolButton aria-label="管理快照">
        <SnapshotIcon kind="manage" />
      </ToolButton>
      <Separator $margin="0 10px 0 7px" />
      <ToggleButton aria-label="库" aria-pressed="true">
        <LibraryViewIcon />
      </ToggleButton>
      <ToolButton $width={48} aria-label="缩略图">
        <ThumbnailIcon />
      </ToolButton>
      <ToolButton $width={34} aria-label="全屏">
        <FullscreenIcon />
      </ToolButton>
      <ToolButton $width={48} aria-label="Unity">
        <UnityIcon />
      </ToolButton>
      <Separator $margin="0 11px 0 3px" />
      <ToggleButton aria-label="控制台" aria-pressed="true">
        <ConsoleIcon />
      </ToggleButton>
      <Separator $margin="0 11px 0 9px" />
      <ToggleButton aria-label="拉伸" aria-pressed="true">
        <StretchIcon />
      </ToggleButton>
      <ToolButton $width={20} aria-label="拉伸选项">
        <Triangle />
      </ToolButton>
    </MenuBar>
  );
}

function LibraryPane() {
  return (
    <Library>
      <LibraryHeader>
        <LibraryTitle>库</LibraryTitle>
        <PlainButton aria-label="关闭库">
          <Cross />
        </PlainButton>
      </LibraryHeader>
      <SearchBox>
        <SearchIcon />
        <SearchInput aria-label="搜索" placeholder="在此处键入内容进行搜..." />
        <Triangle color="#000" />
      </SearchBox>
      <Tree>
        <TreeRow>
          <Expander aria-label="折叠">
            <svg width="9" height="1">
              <path d="M0 .5h9" stroke="#3d5fa8" />
            </svg>
          </Expander>
          <TreeIcon>
            <MonitorIcon />
          </TreeIcon>
          <TreeLabel>我的计算机</TreeLabel>
        </TreeRow>
        {machines.map(({ name, state, focused, selected }) => (
          <TreeRow key={name} $depth={1}>
            <VmIcon state={state} />
            <TreeLabel $focused={focused} $selected={selected}>
              {name}
            </TreeLabel>
          </TreeRow>
        ))}
        <TreeRow>
          <TreeIcon $indent={21}>
            <SharedIcon />
          </TreeIcon>
          <TreeLabel>共享的虚拟机</TreeLabel>
        </TreeRow>
      </Tree>
    </Library>
  );
}

function Desktop() {
  return (
    <KaliPanel>
      <DragonTile>
        <SiKalilinux size={27} stroke="currentColor" strokeWidth={1} />
      </DragonTile>
      <PanelDivider $margin="0 9px 0 16px" />
      <Launchers>
        <DesktopTile />
        <FilesTile />
        <TerminalTile />
        <RecordTile />
      </Launchers>
      <PanelDivider $margin="0 11px 0 8px" />
      <Pager>
        <ActiveDesk aria-label="Firefox">
          <FirefoxIcon />
        </ActiveDesk>
      </Pager>
      <Task $active>
        <FirefoxIcon />
        <span>WebGoat - Mozilla Firef...</span>
      </Task>
      <Task $gap={4}>
        <TerminalIcon>
          <TerminalTile width={19} />
          <CountBadge>2</CountBadge>
        </TerminalIcon>
        <span>qterminal</span>
      </Task>
      <Task>
        <FolderIcon />
        <span>java</span>
      </Task>
      <Tray>
        <Clock>14:26</Clock>
        {trayIcons.display}
        {trayIcons.bell}
        {trayIcons.power}
        <PanelDivider $margin="0 -6px" />
        {trayIcons.lock}
        {trayIcons.logout}
      </Tray>
    </KaliPanel>
  );
}

function BrowserChrome() {
  return (
    <>
      <FirefoxTitle>
        <DocBadge>
          <FirefoxIcon />
        </DocBadge>
        <FirefoxTitleText>WebGoat - Mozilla Firefox</FirefoxTitleText>
        <FrameControls>
          <svg width="10" height="11">
            <path d="M0 9.500h10" stroke="#fff" strokeWidth="2.5" />
          </svg>
          <svg width="10" height="11">
            <rect x="1.5" y="1.5" width="7" height="7.5" fill="none" stroke="#fff" strokeWidth="2.6" />
          </svg>
          <Cross size={11} color="#fff" width={2.4} />
        </FrameControls>
      </FirefoxTitle>
      <TabStrip>
        <BrowserTab>
          <span>WebGoat</span>
          <Cross color="#d3d5d8" width={1.8} />
        </BrowserTab>
        <NewTab aria-label="New tab">
          <Glyph d="M10 1.500v17M1.500 10h17" size={18} width={2.4} />
        </NewTab>
      </TabStrip>
      <NavBar>
        <BackButton aria-label="Back">
          <Glyph d={paths.back} color="#e8e8e8" />
        </BackButton>
        <NavButton aria-label="Forward">
          <Glyph d={paths.forward} color="#85878b" />
        </NavButton>
        <NavButton aria-label="Reload">
          <Glyph d={paths.reload} width={2.4} />
        </NavButton>
        <NavButton aria-label="Home">
          <Glyph d={paths.home} width={2.2} />
        </NavButton>
        <UrlBar>
          <Glyph d={paths.shield} size={18} color="#b5b6b9" />
          <UrlDivider />
          <Glyph d={paths.info} size={18} color="#96989e" width={1.6} />
          <Url>
            <b>localhost</b>:8080/WebGoat/start.mvc#attack/300/900
          </Url>
          <UrlActions>
            <svg width="20" height="20" fill="#b5b6b9">
              <circle cx="3" cy="10" r="2.3" />
              <circle cx="10" cy="10" r="2.3" />
              <circle cx="17" cy="10" r="2.3" />
            </svg>
            <Glyph d={paths.pocket} color="#b5b6b9" />
            <Glyph d={paths.star} color="#b5b6b9" />
          </UrlActions>
        </UrlBar>
        <BrowserTools>
          <Glyph d={paths.library} />
          <SidebarIcon />
          <AccountIcon />
          <ToolsDivider />
          <Glyph d={paths.menu} width={2.2} size={18} />
        </BrowserTools>
      </NavBar>
      <Bookmarks>
        {bookmarks.map(([name, kind]) => (
          <Bookmark key={name} href="#">
            <BookmarkIcon kind={kind} />
            {name}
          </Bookmark>
        ))}
      </Bookmarks>
    </>
  );
}

function Category({ name }) {
  return (
    <CategoryRow>
      <CategoryLink href="#">
        {name}
        <Chevron />
      </CategoryLink>
    </CategoryRow>
  );
}

function WebGoatMenu() {
  return (
    <SideMenu>
      <SideList $scrolled>
        {categoriesAbove.map((name) => (
          <Category key={name} name={name} />
        ))}
      </SideList>
      <LessonList>
        {lessons.map(({ name, solved, current }) => (
          <LessonRow key={name} $current={current}>
            <LessonLink href="#">
              {name}
              {solved && <SolvedIcon />}
            </LessonLink>
          </LessonRow>
        ))}
      </LessonList>
      <SideList>
        {categoriesBelow.map((name) => (
          <Category key={name} name={name} />
        ))}
      </SideList>
    </SideMenu>
  );
}

function Squiggle({ line, left, width }) {
  let d = 'M0 3';
  for (let x = 2; x <= width; x += 2) {
    d += `L${x} ${x % 4 === 0 ? 3 : 1}`;
  }
  return (
    <SpellMark $left={left} $line={line} width={width} height="4" fill="none" stroke="#ee2222">
      <path d={d} />
    </SpellMark>
  );
}

function LessonPane() {
  const [title, setTitle] = useState('breaking news');
  const [message, setMessage] = useState(defaultMessage);

  return (
    <Lesson>
      <Instructions>{instructions}</Instructions>
      <LessonForm onSubmit={(e) => e.preventDefault()}>
        <Field $gap={7}>
          <FieldLabel htmlFor="title" $height={35}>
            Title:
          </FieldLabel>
          <TitleInput id="title" value={title} onChange={(e) => setTitle(e.target.value)} />
        </Field>
        <Field $gap={4}>
          <FieldLabel htmlFor="message" $height={23}>
            Message:
          </FieldLabel>
          <Editor>
            <MessageInput
              id="message"
              spellCheck={false}
              value={message}
              onChange={(e) => setMessage(e.target.value)}
            />
            {message === defaultMessage &&
              misspelt.map((mark) => <Squiggle key={`${mark.line}${mark.left}`} {...mark} />)}
            <PointerBar />
            <Grip width="17" height="17" stroke="#b3b3b3" strokeWidth="1.5">
              <path d="M0 17L17 0M5 17L17 5M9 17l8-8M13 17l4-4" />
            </Grip>
          </Editor>
        </Field>
        <SubmitButton type="submit">Submit</SubmitButton>
      </LessonForm>
      <Rule $top={11} />
      <Rule $top={11} />
      <MessageHeading>Message List</MessageHeading>
    </Lesson>
  );
}

function Params({ rows, width }) {
  return (
    <ParamTable $width={width}>
      <tbody>
        {rows.map(([name, value]) => (
          <tr key={name}>
            <th scope="row">{name}</th>
            <td>{value}</td>
          </tr>
        ))}
      </tbody>
    </ParamTable>
  );
}

export default function App() {
  return (
    <>
      <GlobalStyles />
      <Window>
        <TitleBar>
          <VmwareLogo />
          <WindowTitle>Kali 20184316 - VMware Workstation</WindowTitle>
          <WindowControl aria-label="最小化">
            <svg width="16" height="16" stroke="#000">
              <path d="M0 7.500h15" />
            </svg>
          </WindowControl>
          <WindowControl aria-label="还原">
            <svg width="16" height="16" fill="none" stroke="#000">
              <path d="M.5 3.500h11v11H.5zM3.500 3.500v-3h11v11h-3" />
            </svg>
          </WindowControl>
          <WindowControl aria-label="关闭">
            <Cross size={18} width={0.9} />
          </WindowControl>
        </TitleBar>
        <Toolbar />
        <Workspace>
          <LibraryPane />
          <Display>
            <VmTabs>
              <VmTab>
                <VmIcon state="running" />
                <VmTabName>Kali 20184316</VmTabName>
                <Cross size={15} color="#bdbdbd" width={1.2} />
              </VmTab>
            </VmTabs>
            <Guest>
              <Desktop />
              <BrowserChrome />
              <Page>
                <WebGoatMenu />
                <ScrollTrack />
                <Columns>
                  <LessonPane />
                  <ParamsCard>
                    <CardTitle>Cookies / Parameters</CardTitle>
                    <Rule $top={9} />
                    <CardHeading $top={10}>Cookie/s</CardHeading>
                    <Params rows={cookie} width="100%" />
                    <CardHeading $top={15}>Parameters</CardHeading>
                    <Params rows={parameters} width="95%" />
                  </ParamsCard>
                </Columns>
                <ScrollTrack $offset={131}>
                  <ScrollThumb />
                </ScrollTrack>
              </Page>
            </Guest>
          </Display>
        </Workspace>
        <StatusBar>
          <span>要将输入定向到该虚拟机，请将鼠标指针移入其中或按 Ctrl+G。</span>
          <Devices>
            {deviceIcons.map(([label, color, shape, active]) => (
              <svg
                key={label}
                width="24"
                height="24"
                viewBox="0 0 24 24"
                fill="none"
                stroke={color}
                strokeWidth="1.7"
                aria-label={label}
              >
                {shape}
                {active && <circle cx="19" cy="19.5" r="4" fill="#7ec41c" stroke="none" />}
              </svg>
            ))}
            <Separator $margin="0 5px 0 3px" />
            <NoteIcon />
          </Devices>
        </StatusBar>
      </Window>
    </>
  );
}
